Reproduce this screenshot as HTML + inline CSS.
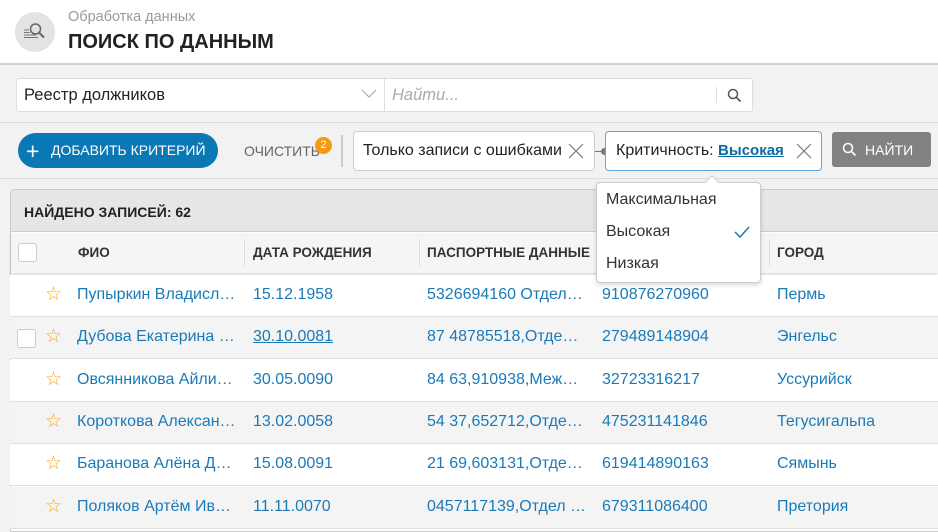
<!DOCTYPE html>
<html><head><meta charset="utf-8"><style>
*{box-sizing:border-box;margin:0;padding:0}
body{width:938px;height:532px;overflow:hidden;background:#f2f2f2;font-family:"Liberation Sans","DejaVu Sans",sans-serif;position:relative;color:#222}
.a{position:absolute}
.hdr{left:0;top:0;width:938px;height:65px;background:#fff;border-bottom:2px solid #d0d0d0}
.t{white-space:nowrap}
.link{color:#1a7ab8}
.row{position:absolute;left:10px;width:928px;height:42px;border-bottom:1px solid #e0e0e0;font-size:16px;color:#1a7ab8}
.row span{position:absolute;top:11px;white-space:nowrap}
.row span.st{color:#f5a623;font-size:19px;top:8px;left:35px}
.ch{position:absolute;font-size:13.5px;font-weight:bold;color:#333;top:12px}
.sep{position:absolute;top:6px;width:1px;height:28px;background:#ddd}
.cb{position:absolute;width:19px;height:19px;border:1px solid #ccc;border-radius:3px;background:#fff}
</style></head><body>
<div class="a hdr"></div>
<div class="a" style="left:15px;top:12px;width:40px;height:40px;border-radius:50%;background:#e3e3e3"></div>
<svg class="a" style="left:22px;top:19px" width="26" height="26" viewBox="0 0 26 26"><circle cx="13.5" cy="10" r="5" fill="none" stroke="#666" stroke-width="1.5"/><line x1="17" y1="13.5" x2="22" y2="18.5" stroke="#666" stroke-width="2"/><g stroke="#777" stroke-width="1"><line x1="2" y1="11" x2="7" y2="11"/><line x1="2" y1="13.5" x2="8" y2="13.5"/><line x1="2" y1="16" x2="14" y2="16"/><line x1="2" y1="18.5" x2="16" y2="18.5"/></g></svg>
<div class="a t" style="left:68px;top:9px;font-size:14.5px;color:#999">Обработка данных</div>
<div class="a t" style="left:68px;top:31px;font-size:20px;font-weight:bold;color:#222">ПОИСК ПО ДАННЫМ</div>

<div class="a" style="left:16px;top:78px;width:737px;height:34px;background:#fff;border:1px solid #ddd;border-radius:3px"></div>
<div class="a t" style="left:24px;top:86px;font-size:16.5px;color:#222">Реестр должников</div>
<svg class="a" style="left:361px;top:89px" width="16" height="10"><polyline points="1,1 8,8 15,1" fill="none" stroke="#aaa" stroke-width="1.2"/></svg>
<div class="a" style="left:384px;top:79px;width:1px;height:32px;background:#ddd"></div>
<div class="a t" style="left:392px;top:86px;font-size:16.5px;color:#aaa;font-style:italic">Найти...</div>
<div class="a" style="left:716px;top:87px;width:1px;height:16px;background:#ddd"></div>
<svg class="a" style="left:727px;top:88px" width="15" height="15"><circle cx="6" cy="6" r="4.5" fill="none" stroke="#555" stroke-width="1.5"/><line x1="9.5" y1="9.5" x2="13.5" y2="13.5" stroke="#555" stroke-width="1.7"/></svg>
<div class="a" style="left:0;top:122px;width:938px;height:1px;background:#ddd"></div>

<div class="a" style="left:18px;top:133px;width:200px;height:35px;border-radius:18px;background:#0a78b4"></div>
<div class="a t" style="left:26px;top:138px;font-size:23px;color:#fff;font-weight:300">+</div>
<div class="a t" style="left:51px;top:142px;font-size:14px;color:#fff">ДОБАВИТЬ КРИТЕРИЙ</div>
<div class="a t" style="left:244px;top:143px;font-size:14px;color:#666">ОЧИСТИТЬ</div>
<div class="a" style="left:315px;top:137px;width:17px;height:17px;border-radius:50%;background:#f39c12;color:#fff;font-size:11px;text-align:center;line-height:17px">2</div>
<div class="a" style="left:341px;top:135px;width:2px;height:32px;background:#ccc"></div>
<div class="a" style="left:353px;top:131px;width:242px;height:40px;background:#fff;border:1px solid #ccc;border-radius:4px"></div>
<div class="a t" style="left:363px;top:142px;font-size:16px;color:#222">Только записи с ошибками</div>
<svg class="a" style="left:568px;top:143px" width="16" height="16"><path d="M1 1L15 15M15 1L1 15" stroke="#777" stroke-width="1.2"/></svg>
<div class="a" style="left:595px;top:151px;width:10px;height:1px;background:#777"></div>
<div class="a" style="left:601px;top:148px;width:7px;height:7px;border-radius:50%;background:#777"></div>
<div class="a" style="left:605px;top:131px;width:217px;height:40px;background:#fff;border:1px solid #5aa9e6;border-radius:4px"></div>
<div class="a t" style="left:616px;top:142px;font-size:16px;color:#222">Критичность: <b class="link" style="text-decoration:underline;color:#0a6aa4;font-size:15px">Высокая</b></div>
<svg class="a" style="left:796px;top:143px" width="16" height="16"><path d="M1 1L15 15M15 1L1 15" stroke="#777" stroke-width="1.2"/></svg>
<div class="a" style="left:832px;top:132px;width:99px;height:35px;background:#828282;border-radius:3px"></div>
<svg class="a" style="left:842px;top:142px" width="15" height="15"><circle cx="6" cy="6" r="4.5" fill="none" stroke="#fff" stroke-width="1.5"/><line x1="9.5" y1="9.5" x2="13.5" y2="13.5" stroke="#fff" stroke-width="1.7"/></svg>
<div class="a t" style="left:865px;top:142px;font-size:14px;color:#fff">НАЙТИ</div>
<div class="a" style="left:0;top:178px;width:938px;height:1px;background:#ddd"></div>

<div class="a" style="left:10px;top:189px;width:940px;height:343px;background:#fff;border:1px solid #ccc;border-radius:4px 0 0 0"></div>
<div class="a" style="left:11px;top:190px;width:927px;height:42px;background:#e6e6e6;border-bottom:1px solid #ccc;border-radius:4px 0 0 0"></div>
<div class="a t" style="left:24px;top:204px;font-size:14px;font-weight:bold;color:#222">НАЙДЕНО ЗАПИСЕЙ: 62</div>
<div class="a" style="left:11px;top:233px;width:927px;height:40px;background:#f5f5f5;box-shadow:0 2px 3px rgba(0,0,0,.15)">
<div class="cb" style="left:7px;top:10px"></div>
<div class="ch" style="left:67px">ФИО</div>
<div class="sep" style="left:233px"></div><div class="ch" style="left:242px">ДАТА РОЖДЕНИЯ</div>
<div class="sep" style="left:408px"></div><div class="ch" style="left:416px">ПАСПОРТНЫЕ ДАННЫЕ</div>
<div class="sep" style="left:758px"></div><div class="ch" style="left:766px">ГОРОД</div>
</div>

<div class="row" style="top:275px;background:#fff"><span class="st">☆</span><span style="left:67px">Пупыркин Владисл…</span><span style="left:243px">15.12.1958</span><span style="left:417px">5326694160 Отдел…</span><span style="left:592px">910876270960</span><span style="left:767px">Пермь</span></div>
<div class="row" style="top:317px;background:#f4f4f4"><div class="cb" style="left:7px;top:12px"></div><span class="st">☆</span><span style="left:67px">Дубова Екатерина …</span><span style="left:243px;text-decoration:underline">30.10.0081</span><span style="left:417px">87 48785518,Отде…</span><span style="left:592px">279489148904</span><span style="left:767px">Энгельс</span></div>
<div class="row" style="top:360px;background:#fff"><span class="st">☆</span><span style="left:67px">Овсянникова Айли…</span><span style="left:243px">30.05.0090</span><span style="left:417px">84 63,910938,Меж…</span><span style="left:592px">32723316217</span><span style="left:767px">Уссурийск</span></div>
<div class="row" style="top:402px;background:#f4f4f4"><span class="st">☆</span><span style="left:67px">Короткова Алексан…</span><span style="left:243px">13.02.0058</span><span style="left:417px">54 37,652712,Отде…</span><span style="left:592px">475231141846</span><span style="left:767px">Тегусигальпа</span></div>
<div class="row" style="top:444px;background:#fff"><span class="st">☆</span><span style="left:67px">Баранова Алёна Д…</span><span style="left:243px">15.08.0091</span><span style="left:417px">21 69,603131,Отде…</span><span style="left:592px">619414890163</span><span style="left:767px">Сямынь</span></div>
<div class="row" style="top:487px;background:#f4f4f4"><span class="st">☆</span><span style="left:67px">Поляков Артём Ив…</span><span style="left:243px">11.11.0070</span><span style="left:417px">0457117139,Отдел …</span><span style="left:592px">679311086400</span><span style="left:767px">Претория</span></div>

<div class="a" style="left:596px;top:182px;width:165px;height:101px;background:#fff;border:1px solid #ccc;border-radius:4px;box-shadow:0 2px 5px rgba(0,0,0,.15)"></div>
<div class="a" style="left:707px;top:177px;width:10px;height:10px;background:#fff;border-left:1px solid #ccc;border-top:1px solid #ccc;transform:rotate(45deg)"></div>
<div class="a t" style="left:606px;top:191px;font-size:16px;color:#333">Максимальная</div>
<div class="a t" style="left:606px;top:223px;font-size:16px;color:#333">Высокая</div>
<svg class="a" style="left:734px;top:226px" width="16" height="12"><polyline points="1,6 6,11 15,1" fill="none" stroke="#1a7ab8" stroke-width="1.5"/></svg>
<div class="a t" style="left:606px;top:255px;font-size:16px;color:#333">Низкая</div>
</body></html>
